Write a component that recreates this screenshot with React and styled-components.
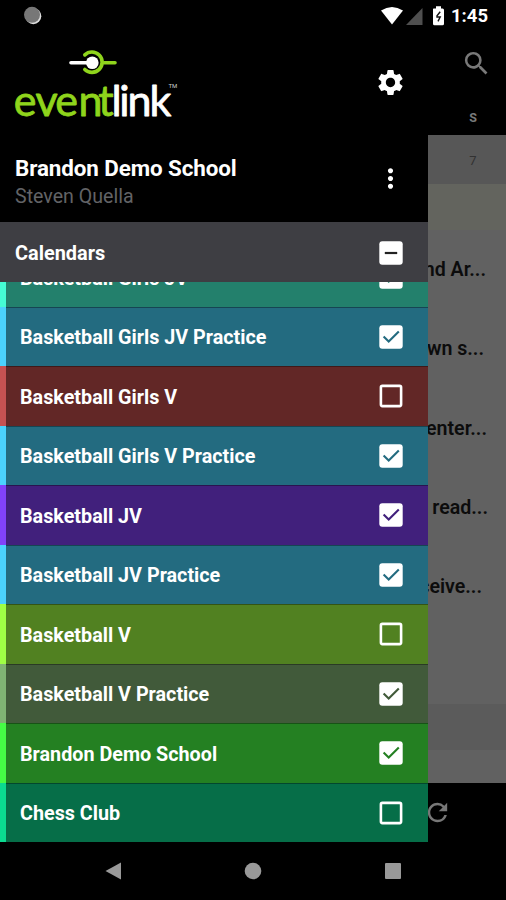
import { useState } from "react";
import styled, { createGlobalStyle } from "styled-components";
import { MdMoreVert, MdRefresh, MdSearch, MdSettings } from "react-icons/md";

const GlobalStyle = createGlobalStyle`
  * {
    box-sizing: border-box;
  }
  body {
    margin: 0;
    background: #000;
    font-family: Roboto, "Liberation Sans", sans-serif;
  }
`;

const initialCalendars = [
  { name: "Basketball Girls JV Practice", color: "#236b80", strip: "#4bd2fd", checked: true },
  { name: "Basketball Girls V", color: "#622726", strip: "#c65252", checked: false },
  { name: "Basketball Girls V Practice", color: "#236b80", strip: "#4bd2fd", checked: true },
  { name: "Basketball JV", color: "#41207c", strip: "#8142f8", checked: true },
  { name: "Basketball JV Practice", color: "#236b80", strip: "#4bd2fd", checked: true },
  { name: "Basketball V", color: "#518121", strip: "#9fff45", checked: false },
  { name: "Basketball V Practice", color: "#415a3a", strip: "#80b374", checked: true },
  { name: "Brandon Demo School", color: "#248022", strip: "#45fc45", checked: true },
  { name: "Chess Club", color: "#066e48", strip: "#0bdb90", checked: false },
];

const events = ["nd Ar...", "wn s...", "enter...", "read...", "ceive..."];

const Phone = styled.div`
  width: 506px;
  height: 900px;
  display: grid;
  grid-template-rows: 32px 810px 58px;
  background: #000;
  overflow: hidden;
`;

const StatusBar = styled.div`
  display: flex;
  align-items: center;
  justify-content: space-between;
  padding: 0 18px 0 23px;
  color: #fff;
  & .right {
    display: flex;
    align-items: center;
  }
  & time {
    font-size: 18.5px;
    font-weight: 700;
    line-height: 32px;
    margin-left: 6px;
  }
`;

const Body = styled.div`
  display: grid;
  grid-template-columns: 428px 78px;
`;

const Drawer = styled.aside`
  display: flex;
  flex-direction: column;
  height: 810px;
  overflow: hidden;
`;

const Brand = styled.div`
  height: 106px;
  flex: none;
  display: flex;
  align-items: flex-start;
  justify-content: space-between;
  padding-right: 22px;
  color: #fff;
  & .settings {
    margin-top: 35px;
  }
`;

const Account = styled.div`
  height: 84px;
  flex: none;
  display: flex;
  justify-content: space-between;
  padding: 16px 22px 0 15px;
  color: #fff;
  & .name {
    font-size: 22.4px;
    font-weight: 700;
    line-height: 28px;
    letter-spacing: -0.1px;
    white-space: nowrap;
  }
  & .user {
    padding-top: 1px;
    font-size: 19.6px;
    line-height: 28px;
    color: #626366;
  }
  & svg {
    margin-top: 9px;
  }
`;

const SectionHeader = styled.div`
  height: 60px;
  flex: none;
  display: flex;
  align-items: center;
  justify-content: space-between;
  padding: 1px 25px 0 15px;
  background: #3e3e43;
  color: #fff;
  font-size: 19.9px;
  font-weight: 700;
  & .label {
    padding-top: 2px;
  }
`;

const CalendarList = styled.div`
  flex: 1;
  display: flex;
  flex-direction: column;
  justify-content: flex-end;
  overflow: hidden;
`;

const CalendarRow = styled.div`
  height: 59.5px;
  flex: none;
  display: flex;
  align-items: center;
  justify-content: space-between;
  padding: 1px 25px 0 14px;
  background: ${({ $color }) => $color};
  border-left: 6px solid ${({ $strip }) => $strip};
  box-shadow: inset 0 1px 0 rgba(0, 0, 0, 0.35);
  color: #fff;
  font-size: 19.75px;
  font-weight: 700;
  white-space: nowrap;
  & .label {
    padding-top: 2px;
  }
`;

const Check = styled.button`
  width: 24px;
  height: 24px;
  padding: 0;
  border: 0;
  background: none;
  color: ${({ $mark }) => $mark};
  & svg {
    display: block;
  }
`;

const Page = styled.main`
  display: flex;
  flex-direction: column;
  overflow: hidden;
  background: #616161;
`;

const Toolbar = styled.div`
  height: 103px;
  flex: none;
  display: flex;
  flex-direction: column;
  align-items: flex-end;
  background: #000;
  color: #797979;
  padding: 16px 14px 0 0;
`;

const Weekday = styled.div`
  width: 38px;
  margin-top: 31px;
  text-align: center;
  font-size: 12.5px;
  font-weight: 700;
  line-height: 16px;
`;

const DayCell = styled.div`
  height: 49px;
  flex: none;
  padding: 1px 14px 0 0;
  background: #575757;
  color: #323232;
  font-size: 13px;
  line-height: 49px;
  display: flex;
  justify-content: flex-end;
  & span {
    width: 38px;
    text-align: center;
  }
`;

const Highlight = styled.div`
  height: 46px;
  flex: none;
  background: #63645e;
`;

const Events = styled.div`
  flex: 1;
  display: flex;
  flex-direction: column;
`;

const EventTitle = styled.div`
  height: 79.3px;
  flex: none;
  display: flex;
  align-items: center;
  justify-content: flex-end;
  padding-right: ${({ $right }) => $right}px;
  color: #0c0c0c;
  font-size: 19.6px;
  font-weight: 600;
  white-space: nowrap;
`;

const Divider = styled.div`
  height: 46px;
  flex: none;
  margin-bottom: 33px;
  background: #5b5b5b;
`;

const BottomBar = styled.div`
  height: 59px;
  flex: none;
  background: #000;
  color: #777;
  & svg {
    display: block;
    margin: 15px 0 0 -5px;
  }
`;

const NavBar = styled.nav`
  display: flex;
  justify-content: space-around;
  align-items: center;
  padding: 0 43px;
`;

const Logo = () => (
  <svg width="190" height="100" viewBox="0 0 190 100">
    <g fill="none" strokeLinecap="round" strokeWidth="3.6">
      <path d="M84.8 22.9A10.2 10.2 0 1 1 84.8 37.5" stroke="#8fd41c" />
      <path d="M104 30.7H115" stroke="#8fd41c" />
      <path d="M71 30.7H90" stroke="#fff" />
    </g>
    <circle cx="92.3" cy="30.7" r="6.3" fill="#fff" />
    <g fontFamily="Lato, sans-serif" fontSize="43" strokeWidth="0.8" strokeLinejoin="round">
      <text x="13.8 35.6 55.2 78.4 98.2" y="83.6" fill="#8fd41c" stroke="#8fd41c">
        event
      </text>
      <text x="111.5 119.2 127.4 149.4" y="83.6" fill="#fff" stroke="#fff">
        link
      </text>
    </g>
    <text x="168.5" y="56" fill="#ccc" fontFamily="Roboto, sans-serif" fontSize="6">
      TM
    </text>
  </svg>
);

const Checkbox = ({ state, color, onClick }) => (
  <Check $mark={color} onClick={onClick}>
    <svg width="24" height="24" viewBox="0 0 24 24" fill="none">
      {state === "off" ? (
        <rect x="1.9" y="1.9" width="20.2" height="20.2" rx="1.5" stroke="#fff" strokeWidth="2.6" />
      ) : (
        <rect x="0.3" y="0.3" width="23.4" height="23.4" rx="3" fill="#fff" />
      )}
      {state === "on" && (
        <path d="M4.6 11.6L9.7 16.6L19.8 6.6" stroke="currentColor" strokeWidth="2.1" />
      )}
      {state === "mixed" && <path d="M5.8 12H18.2" stroke="#222" strokeWidth="2.2" />}
    </svg>
  </Check>
);

const App = () => {
  const [calendars, setCalendars] = useState(initialCalendars);

  const toggle = (index) =>
    setCalendars(calendars.map((c, i) => (i === index ? { ...c, checked: !c.checked } : c)));

  return (
    <Phone>
      <GlobalStyle />
      <StatusBar>
        <svg width="20" height="20" viewBox="0 0 20 20">
          <circle cx="10.3" cy="10.2" r="8" fill="#ddd" />
          <circle cx="9" cy="8.8" r="8" fill="#777" />
        </svg>
        <div className="right">
          <svg width="64" height="22" viewBox="0 0 64 22">
            <path d="M0 5.5Q11 -1.5 22 5.5L11 19.5Z" fill="#fff" />
            <path d="M41.5 3V20H25Z" fill="#4f4f4f" />
            <path
              d="M52.5 3.5H55V1.3H60V3.5H61.5Q63 3.5 63 5V18.7Q63 20.2 61.5 20.2H53.5Q52 20.2 52 18.7V4Z"
              fill="#fff"
            />
            <path
              d="M59.2 6.8L56 10.8V12H59.2L57 16.4"
              fill="none"
              stroke="#111"
              strokeWidth="1.4"
            />
          </svg>
          <time>1:45</time>
        </div>
      </StatusBar>
      <Body>
        <Drawer>
          <Brand>
            <Logo />
            <MdSettings className="settings" size={31} />
          </Brand>
          <Account>
            <div>
              <div className="name">Brandon Demo School</div>
              <div className="user">Steven Quella</div>
            </div>
            <MdMoreVert size={31} />
          </Account>
          <SectionHeader>
            <span className="label">Calendars</span>
            <Checkbox state="mixed" />
          </SectionHeader>
          <CalendarList>
            <CalendarRow $color="#23806c" $strip="#45fdd5">
              <span className="label">Basketball Girls JV</span>
              <Checkbox state="on" color="#23806c" />
            </CalendarRow>
            {calendars.map(({ name, color, strip, checked }, i) => (
              <CalendarRow key={name} $color={color} $strip={strip}>
                <span className="label">{name}</span>
                <Checkbox
                  state={checked ? "on" : "off"}
                  color={color}
                  onClick={() => toggle(i)}
                />
              </CalendarRow>
            ))}
          </CalendarList>
        </Drawer>
        <Page>
          <Toolbar>
            <MdSearch size={31} />
            <Weekday>S</Weekday>
          </Toolbar>
          <DayCell>
            <span>7</span>
          </DayCell>
          <Highlight />
          <Events>
            {events.map((title, i) => (
              <EventTitle key={title} $right={[20, 22, 19, 18, 24][i]}>
                {title}
              </EventTitle>
            ))}
          </Events>
          <Divider />
          <BottomBar>
            <MdRefresh size={29} />
          </BottomBar>
        </Page>
      </Body>
      <NavBar>
        <svg width="18" height="20" viewBox="0 0 18 20">
          <path d="M17 1.5V18.5L1.5 10Z" fill="#999" />
        </svg>
        <svg width="18" height="18" viewBox="0 0 18 18">
          <circle cx="9" cy="9" r="8.3" fill="#999" />
        </svg>
        <svg width="18" height="18" viewBox="0 0 18 18">
          <rect x="1" y="1" width="16" height="16" rx="1" fill="#999" />
        </svg>
      </NavBar>
    </Phone>
  );
};

export default App;
